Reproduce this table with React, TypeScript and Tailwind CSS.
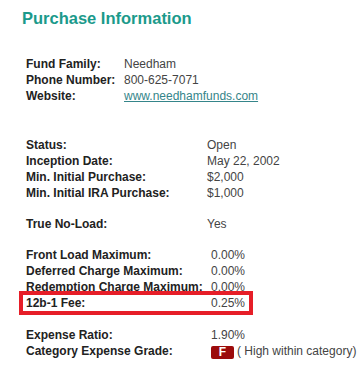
const basics = [
  { label: "Fund Family:", value: "Needham" },
  { label: "Phone Number:", value: "800-625-7071" },
];

const status = [
  { label: "Status:", value: "Open" },
  { label: "Inception Date:", value: "May 22, 2002" },
  { label: "Min. Initial Purchase:", value: "$2,000" },
  { label: "Min. Initial IRA Purchase:", value: "$1,000" },
];

const loads = [
  { label: "Front Load Maximum:", value: "0.00%" },
  { label: "Deferred Charge Maximum:", value: "0.00%" },
  { label: "Redemption Charge Maximum:", value: "0.00%" },
];

function Row({ label, value, labelWidth }: { label: string; value: React.ReactNode; labelWidth: string }) {
  return (
    <div className="flex h-4 leading-4 whitespace-nowrap">
      <div className={`${labelWidth} shrink-0 font-bold text-[#222]`}>{label}</div>
      <div className="text-[#444]">{value}</div>
    </div>
  );
}

export default function App() {
  return (
    <div
      className="w-[358px] h-[372px] bg-white overflow-hidden text-[12px]"
      style={{ fontFamily: '"Liberation Sans", Arial, sans-serif' }}
    >
      <h2 className="pl-[22px] pt-2 text-[16.5px] leading-5 font-bold text-[#1b9a8b]">Purchase Information</h2>

      <div className="pl-[26px] mt-7">
        {basics.map(r => (
          <Row key={r.label} label={r.label} value={r.value} labelWidth="w-[98px]" />
        ))}
        <Row
          label="Website:"
          labelWidth="w-[98px]"
          value={<a href="#" className="text-[#35858a] underline">www.needhamfunds.com</a>}
        />

        <div className="mt-[33px]">
          {status.map(r => (
            <Row key={r.label} label={r.label} value={r.value} labelWidth="w-[181px]" />
          ))}
        </div>

        <div className="mt-[15px]">
          <Row label="True No-Load:" value="Yes" labelWidth="w-[181px]" />
        </div>

        <div className="mt-[15px]">
          {loads.map(r => (
            <Row key={r.label} label={r.label} value={r.value} labelWidth="w-[185px]" />
          ))}
          <div className="relative">
            <Row label="12b-1 Fee:" value="0.25%" labelWidth="w-[185px]" />
            <div className="absolute left-[-7px] top-[-4px] w-[234px] h-6 border-4 border-[#e61e28]" />
          </div>
        </div>

        <div className="mt-4">
          <Row label="Expense Ratio:" value="1.90%" labelWidth="w-[185px]" />
          <div className="flex h-4 leading-4 whitespace-nowrap">
            <div className="w-[185px] shrink-0 font-bold text-[#222]">Category Expense Grade:</div>
            <div className="flex items-start text-[#444]">
              <span className="mt-[3px] w-[23px] h-[13px] rounded-[2px] bg-[#9c0b0b] text-white font-bold text-[12px] leading-[13px] text-center">
                F
              </span>
              <span className="ml-[3px]">( High within category)</span>
            </div>
          </div>
        </div>
      </div>
    </div>
  );
}
